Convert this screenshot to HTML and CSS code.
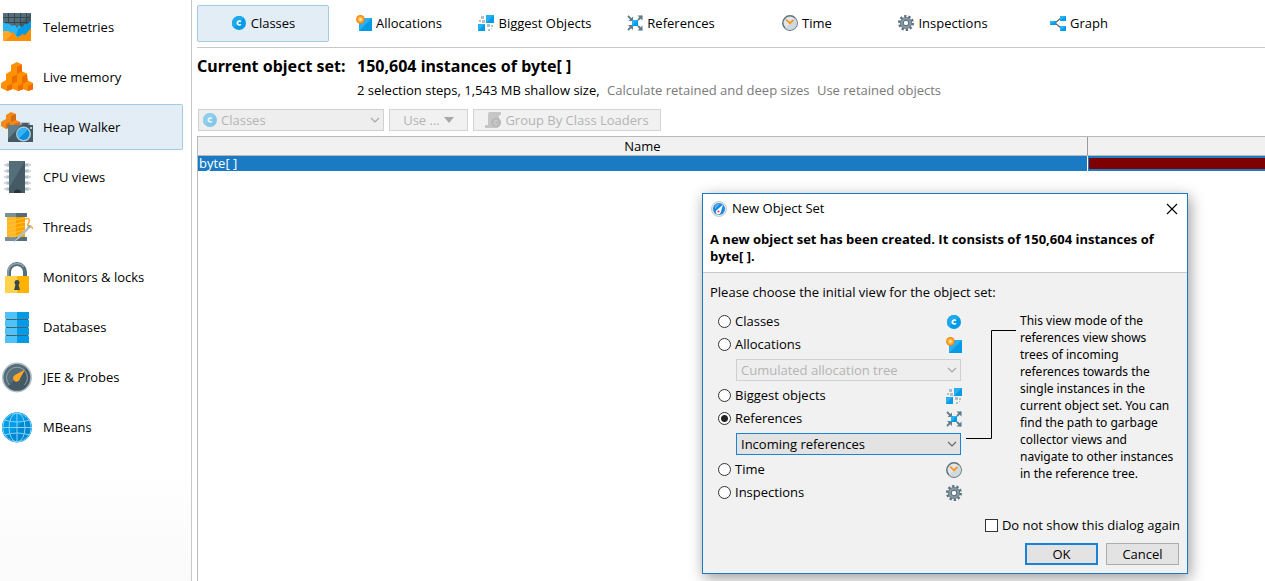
FILE: index.html
```html
<!DOCTYPE html>
<html lang="en">
<head>
<meta charset="utf-8">
<title>Heap Walker</title>
<link rel="stylesheet" href="styles.css">
</head>
<body>
<svg class="sprites" aria-hidden="true">
  <defs>
    <radialGradient id="sun"><stop offset="0" stop-color="#fff8d0"/><stop offset="0.4" stop-color="#ffc04a"/><stop offset="1" stop-color="#f57c00"/></radialGradient>
  </defs>
  <symbol id="i-class" viewBox="0 0 16 16">
    <circle cx="8" cy="8" r="7" fill="#039be5"/><path d="M3 3a7 7 0 0 1 10 0L3 13A7 7 0 0 1 3 3z" fill="#1ea9ec"/>
    <path d="M9.900 6.700A2 2 0 1 0 9.900 9.300" fill="none" stroke="#fff" stroke-width="1.700"/>
  </symbol>
  <symbol id="i-alloc" viewBox="0 0 16 16">
    <path d="M3 3h13v13H3z" fill="#039be5"/><path d="M3 3h13L3 16z" fill="#29b0f2"/>
    <circle cx="4.400" cy="4.400" r="4.300" fill="url(#sun)"/>
  </symbol>
  <symbol id="i-big" viewBox="0 0 16 16">
    <path d="M8 0h8v8H8zM0 9h7v7H0z" fill="#039be5"/><path d="M8 0h8L8 8zM0 9h7l-7 7z" fill="#29b0f2"/>
    <path d="M3 1h3v3H3zM1 5h2v2H1zM4 5h3v3H4zM9 9h3v3H9zM13 10h2v2h-2zM10 14h2v2h-2zM13 13h1v1h-1z" fill="#b0bec5"/>
  </symbol>
  <symbol id="i-ref" viewBox="0 0 16 16">
    <path d="M1 1l4 4M15 1l-4 4M1 15l4-4M15 15l-4-4" stroke="#607d8b" stroke-width="1.800"/>
    <path d="M6 1.500v4.500H1.500zM15.500 .5v5l-5-5zM1 10h5v5zM15.500 15.500h-5l5-5z" fill="#607d8b"/>
    <path d="M5 5h6v6H5z" fill="#039be5"/><path d="M5 5h6l-6 6z" fill="#29b0f2"/>
  </symbol>
  <symbol id="i-time" viewBox="0 0 16 16">
    <circle cx="8" cy="8" r="7.200" fill="#e0e6e9" stroke="#607480" stroke-width="1.500"/>
    <path d="M13 3a7 7 0 0 1-10 10z" fill="#cfd8dc"/>
    <path d="M4 4.500l4 3.700 3.300-3.300" fill="none" stroke="#ff9416" stroke-width="1.700"/>
  </symbol>
  <symbol id="i-gear" viewBox="0 0 16 16">
    <circle cx="8" cy="8" r="6.600" fill="none" stroke="#607480" stroke-width="2.800" stroke-dasharray="2.300 1.850"/>
    <circle cx="8" cy="8" r="4.100" fill="#eceff1" stroke="#607480" stroke-width="4"/>
    <circle cx="8" cy="8" r="4.300" fill="none" stroke="#8499a4" stroke-width="2.200"/>
    <circle cx="8" cy="8" r="2" fill="#fff"/>
  </symbol>
  <symbol id="i-graph" viewBox="0 0 16 16">
    <path d="M5 8l6-5M5 8l6 5" stroke="#546e7a" stroke-width="1.300"/>
    <path d="M0 6h6v4H0zM10 1h6v5h-6zM10 11h6v5h-6z" fill="#039be5"/>
    <path d="M0 6h6l-6 4zM10 1h6l-6 5zM10 11h6l-6 5z" fill="#29b0f2"/>
  </symbol>
  <symbol id="i-chevron" viewBox="0 0 10 6"><path d="M1 1l4 4 4-4" fill="none" stroke="currentColor" stroke-width="1.200"/></symbol>
</svg>

<div class="app">
  <nav class="sidebar" aria-label="Views">
    <a class="view" href="#telemetries">
      <svg class="view-icon" viewBox="0 0 32 32"><path d="M2 2h28v28H2z" fill="#455a64"/><path d="M2 2h28L2 30z" fill="#546e7a"/><path d="M7.500 2v12M13.500 2v12M19.500 2v12M25.500 2v12M2 6.500h28M2 11.500h28" stroke="#37474f"/><path d="M2 11l4 2 1-1 4 3 3-1 2 3 2-3 3 3 3-4 2 1 4-4v20H2z" fill="#29b6f6"/><path d="M17 18l9-5 4-3v15H15z" fill="#039be5"/><path d="M2 20h5l3 2 2-1 5 6 4-4 3 1 6-7v13H2z" fill="#ff8f00"/><path d="M2 20h5l3 2 1 1-7 7H2z" fill="#ffa72b"/></svg>
      Telemetries</a>
    <a class="view" href="#memory">
      <svg class="view-icon" viewBox="0 0 32 32"><path d="M16 1l5 2.500v7l5 2 1 7 5 2.500v6L27 30l-5-2-5 2-5.500-2L6 30l-6-3v-5l5-3v-6l5-3V4z" fill="#ff9100"/><path d="M16 6l5-2.500v7L16 13zM11 16l5-2.500v7L11 23zM21 16l5-2.500v7L21 23zM6 25l5-2.500v6L6 30zM17 25l5-2.500v6L17 30zM27 25l5-2.500v6L27 30z" fill="#ef6c00"/></svg>
      Live memory</a>
    <a class="view current" href="#heap" aria-current="page">
      <svg class="view-icon" viewBox="0 0 32 32"><path d="M10 1l5 2v6l4 2v4l-6 3-4-2-4 2-5-3v-4l5-3V4z" fill="#ef8b17"/><path d="M10 5l5-2v6l-5 2zM5 13l4-2v5l-4 2zM13 13l6-2v4l-6 3z" fill="#da6b16"/><path d="M7 14h12l1-3h8l1 3h3v17H7z" fill="#455a64"/><path d="M7 14h12l1-2h2L7 28z" fill="#607d8b"/><path d="M20 14v-2.500h8V14" fill="none" stroke="#b7c8d2"/><circle cx="22.500" cy="23" r="7.500" fill="#a9c9dc"/><circle cx="22.500" cy="23" r="6" fill="#0b8fdc"/><path d="M18.200 18.700a6 6 0 0 1 8.600 0l-8.600 8.600a6 6 0 0 1 0-8.600z" fill="#35b4f5"/><circle cx="30" cy="17" r="1" fill="#dce6ec"/></svg>
      Heap Walker</a>
    <a class="view" href="#cpu">
      <svg class="view-icon" viewBox="0 0 32 32"><path d="M5 4h23M5 10h23M5 16h23M5 22h23M5 28h23" stroke="#b0bec5" stroke-width="3"/><path d="M3 4h3M3 10h3M3 16h3M3 22h3M3 28h3M27 4h3M27 10h3M27 16h3M27 22h3M27 28h3" stroke="#cfd8dc" stroke-width="2"/><path d="M8 0h16v32H8z" fill="#455a64"/><path d="M8 0h16L8 27z" fill="#546e7a"/><path d="M13 32a3.500 3.500 0 0 1 7 0z" fill="#263238"/></svg>
      CPU views</a>
    <a class="view" href="#threads">
      <svg class="view-icon" viewBox="0 0 32 32"><path d="M4 2h22v4H4zM4 26h22v4H4z" fill="#546e7a"/><path d="M4 2h11v4H4zM4 26h11v4H4z" fill="#78909c"/><path d="M6 6h18v20H6z" fill="#ffa000"/><path d="M6 6h9v20H6z" fill="#ffb62b"/><path d="M6 11l18-4M6 15l18-4M6 19l18-4M6 23l18-4M9 26l15-3" stroke="#ffca28" stroke-width=".9"/><path d="M24 8c5-2 5 2 3 5s5 2 5 5" fill="none" stroke="#ffa726" stroke-width="1.500"/><path d="M12 32l6-8 11-10 2 1-11 11z" fill="#b0bec5"/><path d="M27 16.500l2-2" stroke="#607d8b"/></svg>
      Threads</a>
    <a class="view" href="#locks">
      <svg class="view-icon" viewBox="0 0 32 32"><path d="M8 17v-6a8 8 0 0 1 16 0v6" fill="none" stroke="#546e7a" stroke-width="4"/><path d="M7 17v-6a9 9 0 0 1 16-5" fill="none" stroke="#90a4ae" stroke-width="1.500"/><path d="M4 15h24v17H4z" fill="#ffb300"/><path d="M4 15h12v17H4z" fill="#ffd24d"/><circle cx="16" cy="21.500" r="2.500" fill="#37474f"/><path d="M15 22h2l2 7h-6z" fill="#37474f"/></svg>
      Monitors &amp; locks</a>
    <a class="view" href="#databases">
      <svg class="view-icon" viewBox="0 0 32 32"><path d="M4 1h24v31H4z" fill="#039be5"/><path d="M4 1h12v31H4z" fill="#4fc3f7"/><path d="M4 8.500h24M4 16.500h24M4 24.500h24" stroke="#46606e"/><path d="M3.500 7v3l1.500-1.500zM3.500 15v3l1.500-1.500zM3.500 23v3l1.500-1.500zM28.500 7v3l-1.500-1.500zM28.500 15v3l-1.500-1.500zM28.500 23v3l-1.500-1.500z" fill="#fff"/></svg>
      Databases</a>
    <a class="view" href="#probes">
      <svg class="view-icon" viewBox="0 0 32 32"><circle cx="16" cy="16.500" r="15" fill="#b0bec5"/><circle cx="16" cy="16.500" r="13.300" fill="#455a64"/><path d="M6.600 7.100a13.300 13.300 0 0 1 18.800 0L6.600 25.900a13.300 13.300 0 0 1 0-18.800z" fill="#546e7a"/><path d="M8.500 24a10.500 10.500 0 1 1 15 0" fill="none" stroke="#90a4ae"/><path d="M24 8.500l-5 9a3.500 3.500 0 1 1-5-3.500z" fill="#ffa726"/></svg>
      JEE &amp; Probes</a>
    <a class="view" href="#mbeans">
      <svg class="view-icon" viewBox="0 0 32 32"><circle cx="16" cy="16.500" r="15" fill="#0288d1"/><path d="M5.400 5.900a15 15 0 0 1 21.200 0L5.400 27.100a15 15 0 0 1 0-21.200z" fill="#039be5"/><g fill="none" stroke="#81d4fa" stroke-width="1"><circle cx="16" cy="16.500" r="14.300"/><ellipse cx="16" cy="16.500" rx="8" ry="14.500"/><path d="M16 2v29M1 16.500h30M3.500 9q12.500 4 25 0M3.500 24q12.500-4 25 0"/></g></svg>
      MBeans</a>
  </nav>

  <main class="main">
    <div class="tabs" role="tablist">
      <button class="tab selected" role="tab" aria-selected="true"><svg class="icon"><use href="#i-class"/></svg>Classes</button>
      <button class="tab" role="tab"><svg class="icon"><use href="#i-alloc"/></svg>Allocations</button>
      <button class="tab" role="tab"><svg class="icon"><use href="#i-big"/></svg>Biggest Objects</button>
      <button class="tab" role="tab"><svg class="icon"><use href="#i-ref"/></svg>References</button>
      <button class="tab" role="tab"><svg class="icon"><use href="#i-time"/></svg>Time</button>
      <button class="tab" role="tab"><svg class="icon"><use href="#i-gear"/></svg>Inspections</button>
      <button class="tab" role="tab"><svg class="icon"><use href="#i-graph"/></svg>Graph</button>
    </div>

    <header class="summary">
      <h1 class="summary-label">Current object set:</h1>
      <h2 class="summary-value">150,604 instances of byte[ ]</h2>
      <p class="summary-info">2 selection steps, 1,543 MB shallow size,
        <a class="calc" href="#calculate">Calculate retained and deep sizes</a>
        <a class="use" href="#retained">Use retained objects</a></p>
    </header>

    <div class="toolbar">
      <div class="combo combo-classes disabled">
        <svg class="icon combo-icon"><use href="#i-class"/></svg>
        <select class="combo-box with-icon" aria-label="Aggregation level" disabled><option>Classes</option></select>
        <svg class="combo-arrow"><use href="#i-chevron"/></svg>
      </div>
      <button class="tool tool-use" disabled>Use ...<svg class="caret" viewBox="0 0 10 6"><path d="M0 0h10L5 6z" fill="#a8a8a8"/></svg></button>
      <button class="tool tool-group" disabled>
        <svg class="icon" viewBox="0 0 16 16"><path d="M4 0h12v3h-2v3l2 4-2 5-2 1H0v-3h3V2z" fill="#c6c6c6"/><circle cx="11" cy="10.500" r="5" fill="#bababa"/><path d="M12.500 9.500a1.800 1.800 0 1 0 0 2.500" fill="none" stroke="#cecece" stroke-width="1.200"/></svg>Group By Class Loaders</button>
    </div>

    <div class="grid">
      <table class="objects">
        <thead><tr><th class="name" scope="col">Name</th><th class="count" scope="col"></th></tr></thead>
        <tbody><tr><td class="name">byte[ ]</td><td class="count"><div class="bar"></div></td></tr></tbody>
      </table>
    </div>
  </main>

  <section class="dialog" role="dialog" aria-labelledby="dialog-title">
    <div class="dialog-head">
      <div class="titlebar">
        <svg class="icon" viewBox="0 0 16 16"><circle cx="8" cy="8" r="7.500" fill="#e4e8eb" stroke="#c4cacf"/><circle cx="8" cy="8" r="6" fill="#1e88e5"/><path d="M4 5a5 5 0 0 1 5-2.500L4 8z" fill="#5bb3f5"/><path d="M12 3.500L9.500 12a2.500 2.500 0 1 1-3-3.500z" fill="#fff"/><circle cx="7.500" cy="10.500" r="1.100" fill="#e53935"/></svg>
        <span id="dialog-title">New Object Set</span>
        <button class="close" aria-label="Close"><svg class="close-icon" viewBox="0 0 12 12"><path d="M1 1l10 10M11 1L1 11" stroke="#000" stroke-width="1.100"/></svg></button>
      </div>
      <p class="message">A new object set has been created. It consists of 150,604 instances of byte[ ].</p>
    </div>
    <form class="dialog-body">
      <p class="prompt">Please choose the initial view for the object set:</p>
      <div class="choices">
        <div class="options">
          <label class="option"><input class="radio" type="radio" name="view">Classes<svg class="icon"><use href="#i-class"/></svg></label>
          <label class="option"><input class="radio" type="radio" name="view">Allocations<svg class="icon"><use href="#i-alloc"/></svg></label>
          <div class="combo sub disabled"><select class="combo-box" aria-label="Allocation view" disabled><option>Cumulated allocation tree</option></select><svg class="combo-arrow"><use href="#i-chevron"/></svg></div>
          <label class="option"><input class="radio" type="radio" name="view">Biggest objects<svg class="icon"><use href="#i-big"/></svg></label>
          <label class="option"><input class="radio" type="radio" name="view" checked>References<svg class="icon"><use href="#i-ref"/></svg></label>
          <div class="combo sub active"><select class="combo-box" aria-label="Reference view"><option>Incoming references</option></select><svg class="combo-arrow"><use href="#i-chevron"/></svg></div>
          <label class="option"><input class="radio" type="radio" name="view">Time<svg class="icon"><use href="#i-time"/></svg></label>
          <label class="option"><input class="radio" type="radio" name="view">Inspections<svg class="icon"><use href="#i-gear"/></svg></label>
        </div>
        <svg class="connector" viewBox="0 0 50 110"><path d="M50 .5H25.500v108H0" fill="none" stroke="#000"/></svg>
        <p class="hint">This view mode of the<br>references view shows<br>trees of incoming<br>references towards the<br>single instances in the<br>current object set. You can<br>find the path to garbage<br>collector views and<br>navigate to other instances<br>in the reference tree.</p>
      </div>
      <label class="again"><input class="check" type="checkbox">Do not show this dialog again</label>
      <div class="actions">
        <button class="action primary" type="button">OK</button>
        <button class="action" type="button">Cancel</button>
      </div>
    </form>
  </section>
</div>
</body>
</html>
```
FILE: styles.css
```css
* { box-sizing: border-box; }
body, h1, h2, p { margin: 0; }
body, button, select { font-family: "Open Sans", "Noto Sans", sans-serif; font-size: 13px; color: #000; }
body { background: #fff; line-height: 17px; }
button { cursor: default; white-space: nowrap; }
.sprites { position: absolute; width: 0; height: 0; }
.icon { width: 16px; height: 16px; flex: none; }

.app { position: relative; display: flex; min-height: 100vh; overflow: hidden; }

/* Sidebar */
.sidebar { width: 192px; flex: none; display: flex; flex-direction: column; gap: 4px; padding: 4px 8px 4px 0; border-right: 1px solid #c8c8c8; background: linear-gradient(#fff 80%, #fafafa); }
.view { display: flex; align-items: center; gap: 10px; height: 46px; padding-left: 1px; border: 1px solid transparent; border-left: 0; color: #000; text-decoration: none; line-height: 18px; }
.view.current { background: #e3edf6; border-color: #a3cbe0; border-radius: 0 2px 2px 0; }
.view-icon { width: 32px; height: 32px; flex: none; }

/* Main area */
.main { flex: 1; min-width: 0; display: flex; flex-direction: column; padding: 5px 0 0 5px; }
.tabs { display: flex; gap: 4px; padding-bottom: 5px; border-bottom: 1px solid #c8c8c8; }
.tab { display: flex; align-items: center; justify-content: center; gap: 4px; width: 132px; height: 37px; padding: 0 0 1px; border: 1px solid transparent; border-radius: 2px; background: none; }
.tab.selected { background: #e3edf6; border-color: #a3cbe0; }

.summary { display: grid; grid-template-columns: 150px 1fr; column-gap: 10px; row-gap: 4px; padding-top: 7px; }
.summary-label, .summary-value { font-family: "Noto Sans", "Open Sans", sans-serif; font-size: 16px; line-height: 22px; font-weight: 700; white-space: nowrap; }
.summary-info { grid-column: 2; line-height: 18px; }
.summary-info a { color: #7a7a7a; text-decoration: none; }
.calc, .use { margin-left: 4px; }

.toolbar { display: flex; gap: 5px; padding: 10px 0 5px 1px; }
.tool { display: flex; align-items: center; justify-content: center; gap: 4px; height: 22px; padding: 0; border: 1px solid #d4d4d4; background: #f1f1f1; color: #b4b4b4; }
.tool-use { width: 79px; }
.tool-group { width: 188px; }
.caret { width: 10px; height: 6px; }

/* Drop-downs */
.combo { display: grid; align-items: center; height: 22px; }
.combo > * { grid-area: 1 / 1; }
.combo-box { width: 100%; height: 22px; padding: 0 24px 0 4px; border: 1px solid #adadad; border-radius: 0; background: #e3e3e3; appearance: none; }
.combo-box.with-icon { padding-left: 22px; }
.combo-icon { z-index: 1; margin-left: 4px; opacity: 0.45; }
.combo-arrow { justify-self: end; width: 10px; height: 6px; margin-right: 4px; color: #666; pointer-events: none; }
.combo-classes { width: 186px; }
.disabled .combo-box { border-color: #d0d0d0; background: #eee; color: #b4b4b4; opacity: 1; }
.disabled .combo-arrow { color: #a8a8a8; }
.active .combo-box { border-color: #1883d7; }

/* Object table */
.grid { flex: 1; border-left: 1px solid #b8b8b8; border-top: 1px solid #b8b8b8; }
.objects { width: 100%; border-collapse: separate; border-spacing: 0; table-layout: fixed; }
.objects th { height: 19px; padding: 0; border-bottom: 1px solid #b8b8b8; background: #f1f1f1; font-weight: 400; line-height: 18px; }
.objects td { height: 15px; padding: 0; background: #1a7bc4; color: #fff; line-height: 15px; }
.objects td.name { padding-left: 1px; border-right: 1px solid #fff; }
.objects th.name { border-right: 1px solid #999; }
.count { width: 177px; }
.bar { height: 11px; margin-left: 1px; background: #7f0000; }

/* Dialog */
.dialog { position: absolute; left: 702px; top: 193px; width: 486px; border: 1px solid #1a7bc4; background: #f1f1f1; box-shadow: 2px 4px 14px rgba(0, 0, 0, 0.4); }
.dialog-head { padding: 0 8px 7px 7px; border-bottom: 1px solid #c8c8c8; background: #fff; }
.titlebar { display: flex; align-items: center; gap: 5px; height: 29px; padding-left: 1px; }
.close { width: 14px; height: 14px; margin-left: auto; padding: 1px; border: 0; background: none; display: flex; }
.close-icon { width: 12px; height: 12px; }
.message { padding: 8px 8px 0 0; font-weight: 700; }
.dialog-body { padding: 11px 7px 8px; }
.choices { display: flex; gap: 4px; padding: 9px 0 0 8px; }
.options { width: 244px; flex: none; }
.option { display: flex; align-items: center; gap: 4px; height: 23px; }
.option .icon { margin-left: auto; }
.sub { margin: 3px 1px 3px 18px; }
.radio, .check { width: 13px; height: 13px; margin: 0; flex: none; appearance: none; border: 1px solid #333; background: #fff; }
.radio { border-radius: 50%; }
.radio:checked { background: radial-gradient(circle, #222 3px, #fff 4px); }
.connector { width: 50px; height: 110px; flex: none; margin-top: 20px; }
.hint { flex: 1; padding-top: 2px; font-family: "Noto Sans", "Open Sans", sans-serif; font-size: 12px; }
.again { display: flex; align-items: center; justify-content: flex-end; gap: 4px; margin-top: 13px; }
.actions { display: flex; justify-content: flex-end; gap: 8px; padding: 9px 1px 0 0; }
.action { width: 73px; height: 22px; padding: 0; border: 1px solid #adadad; background: #e3e3e3; }
.action.primary { border: 2px solid #1883d7; }
```
